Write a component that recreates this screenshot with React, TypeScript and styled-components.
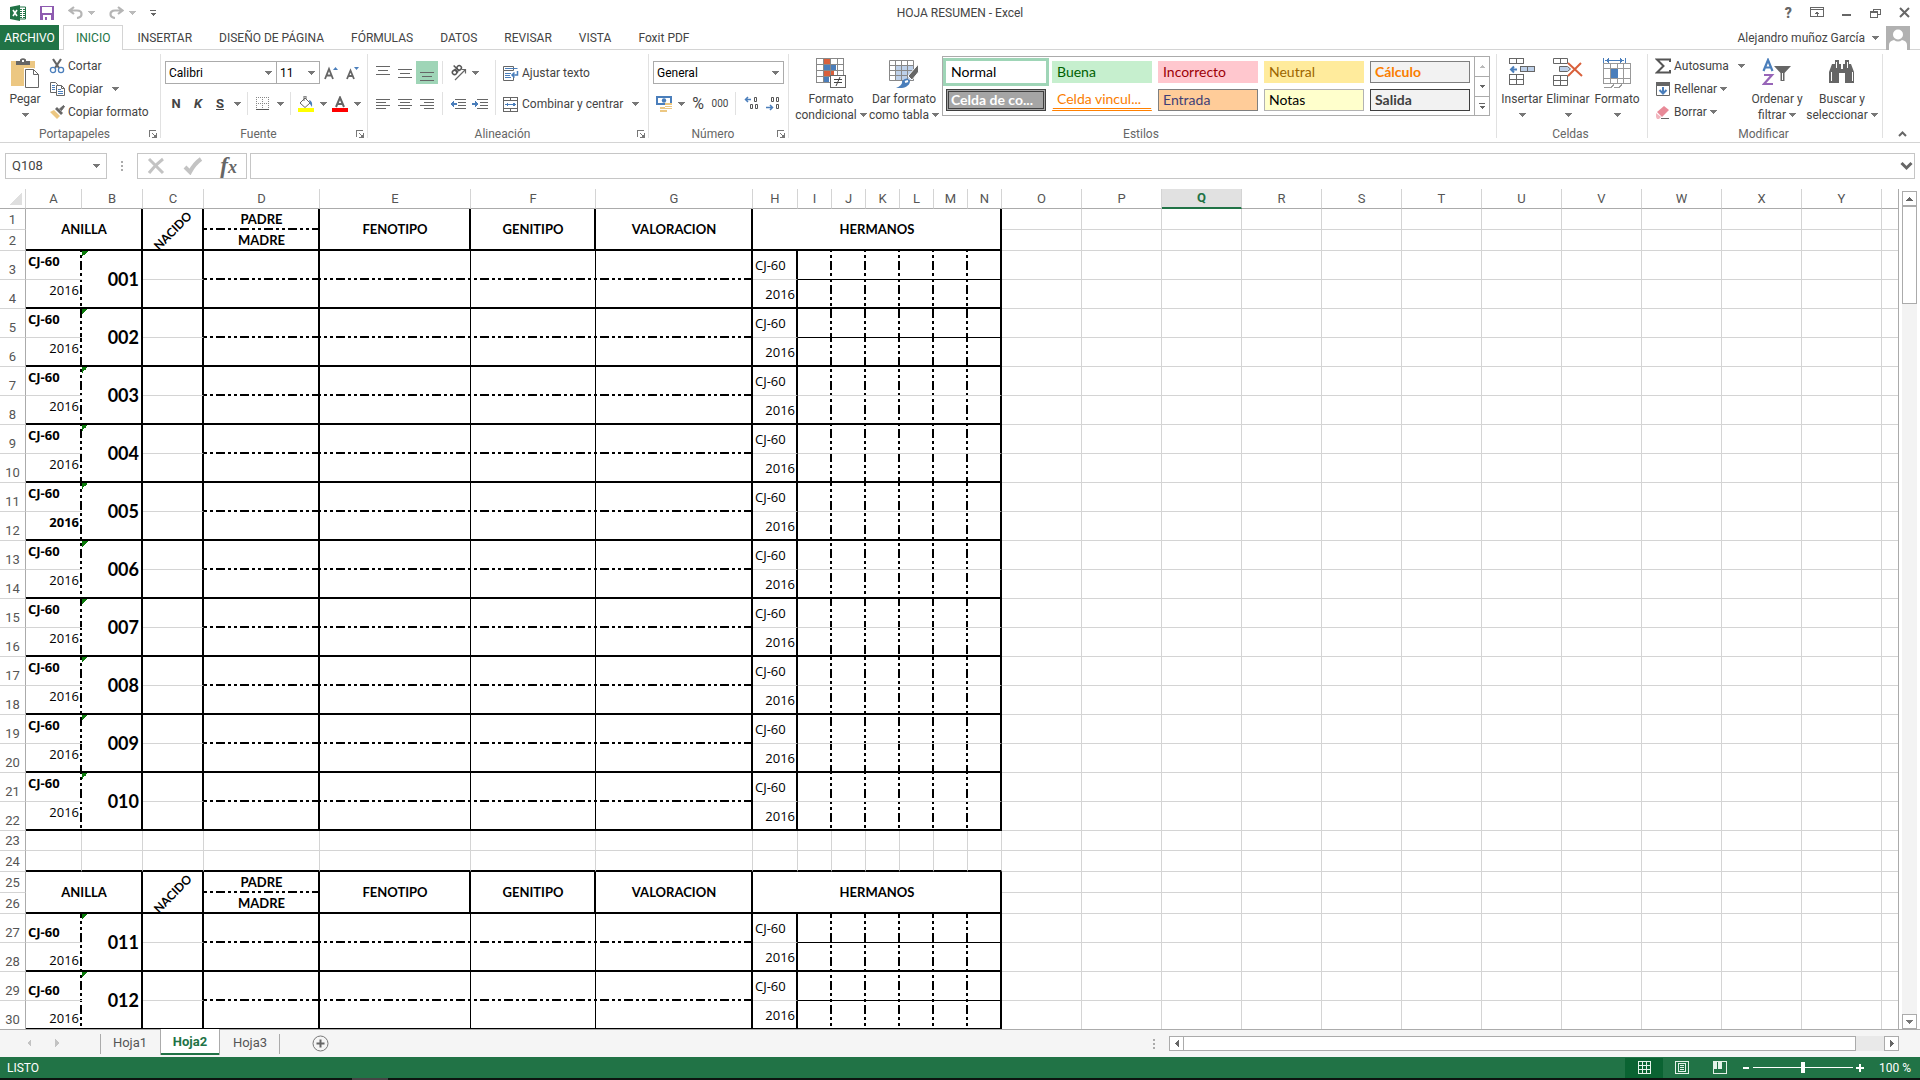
import React from 'react';
import styled, { createGlobalStyle, css } from 'styled-components';

const UI = 'Roboto, "Open Sans", sans-serif';
const CELL = 'Lato, "Open Sans", sans-serif';
const DATA = '"Open Sans", Lato, sans-serif';
const GREEN = '#217346';
const GRID = '#d4d4d4';
const EDGE = '#ababab';
const BLUE = '#4a7ebb';
const INK = '#666';

const Global = createGlobalStyle`
  *, *::before, *::after { box-sizing: border-box; }
  body { margin: 0; font: 12px/16px ${UI}; color: #444; background: #fff; overflow: hidden; }
  button, input, select { font: inherit; color: inherit; margin: 0; padding: 0; border: 0; background: none; border-radius: 0; }
  button { cursor: default; }
  svg { display: block; flex: none; }
`;

const Window = styled.div`
  display: flex;
  flex-direction: column;
  height: 100vh;
`;

/* ---------- icons ---------- */

const Arrow = ({ color = '#777' }: { color?: string }) => (
  <svg width="7" height="4" viewBox="0 0 7 4" shapeRendering="crispEdges"><path d="M0 0h7L4 4H3z" fill={color} /></svg>
);

type IconProps = { w?: number; h?: number; vb?: string; crisp?: boolean; children: React.ReactNode };
const Icon = ({ w = 16, h = 16, vb, crisp, children }: IconProps) => (
  <svg width={w} height={h} viewBox={vb ?? `0 0 ${w} ${h}`} fill="none" shapeRendering={crisp ? 'crispEdges' : 'auto'} aria-hidden="true">
    {children}
  </svg>
);

const ExcelIcon = () => (
  <Icon>
    <path d="M9 2h6.5v12H9z" fill="#fff" stroke={GREEN} />
    <path d="M10 4.5h2M13 4.5h2M10 6.5h2M13 6.5h2M10 8.5h2M13 8.5h2M10 10.500h2M13 10.500h2M10 12.500h2M13 12.500h2" stroke={GREEN} />
    <path d="M0 2l10-2v16L0 14z" fill={GREEN} />
    <path d="M3 5l4 6M7 5l-4 6" stroke="#fff" strokeWidth="1.600" />
  </Icon>
);
const SaveIcon = () => (
  <Icon w={14} h={14} crisp>
    <path d="M0 0h14v14H0z" fill="#8e5bb0" />
    <path d="M2 1h10v6H2zM3 9h8v5H3z" fill="#fff" />
    <path d="M5 11h2v3H5z" fill="#8e5bb0" />
  </Icon>
);
const UndoIcon = () => (
  <Icon w={15} h={13}><path d="M6 1L1.500 4.500 6 8M2 4.500h7c6 0 6 7 0 7.500" stroke="#b5b5b5" strokeWidth="2.200" /></Icon>
);
const RedoIcon = () => (
  <Icon w={15} h={13}><path d="M9 1l4.500 3.500L9 8M13 4.500H6c-6 0-6 7 0 7.500" stroke="#b5b5b5" strokeWidth="2.200" /></Icon>
);
const CustomizeIcon = () => (
  <Icon w={6} h={6} crisp><path d="M0 0h6v1H0zM0 3h6L3 6z" fill={INK} /></Icon>
);
const PasteIcon = () => (
  <Icon w={30} h={30}>
    <path d="M1 3h24v25H1z" fill="#ecc782" />
    <path d="M6 3h4V1.500Q13-1 16 1.500V3h4v4H6z" fill={INK} />
    <path d="M12 2h2v2h-2z" fill="#fff" />
    <path d="M15.500 11.500h8l5 5v13h-13z" fill="#fff" stroke="#fff" strokeWidth="3" />
    <path d="M15.500 11.500h8l5 5v13h-13zM23.500 11.500v5h5" fill="#fff" stroke={INK} />
  </Icon>
);
const CutIcon = () => (
  <Icon>
    <path d="M4 1l6 9M12 1L6 10" stroke={INK} strokeWidth="2.200" />
    <circle cx="4" cy="12" r="2.600" stroke={BLUE} strokeWidth="1.300" /><circle cx="12" cy="12" r="2.600" stroke={BLUE} strokeWidth="1.300" />
  </Icon>
);
const CopyIcon = () => (
  <Icon>
    <path d="M1.500 1.500h5l2 2v8h-7z" fill="#fff" stroke={INK} />
    <path d="M3 4.500h3M3 6.500h3M3 8.500h3" stroke={BLUE} />
    <path d="M7.500 4.500h5l3 3v7h-8z" fill="#fff" stroke={INK} />
    <path d="M12.500 4.500v3h3" stroke={INK} />
    <path d="M9 8.500h3M9 10.500h5M9 12.500h5" stroke={BLUE} />
  </Icon>
);
const BrushIcon = () => (
  <Icon>
    <path d="M1 8l4-2 6 6-3 3z" fill="#ecc782" />
    <path d="M6 5l2-2 6 6-2 2z" fill={INK} />
    <path d="M10.500 5L14.500 1.500l1 1-3 4z" fill={INK} stroke={INK} />
  </Icon>
);
const GrowIcon = ({ small }: { small?: boolean }) => (
  <Icon w={14} h={14}>
    <path d={small ? 'M1 13L4.500 4.500 8 13M2.500 10h4' : 'M1 13L5 3l4 10M2.500 9.500h5'} stroke={INK} strokeWidth="1.800" />
    <path d={small ? 'M8 1h5l-2.500 3z' : 'M9 4h5l-2.500-3z'} fill={BLUE} />
  </Icon>
);
const BordersIcon = () => (
  <Icon w={14} h={14} crisp>
    <path d="M0 .5h14M0 6.500h14M.5 0v12M6.500 0v12M12.500 0v12" stroke="#888" strokeDasharray="1 1" />
    <path d="M0 12h13v1H0z" fill="#555" />
  </Icon>
);
const FillIcon = () => (
  <Icon>
    <path d="M2 7l5-5 5 5-5 4.500z" fill="#fff" stroke={INK} /><path d="M6 5V0h2v3" stroke={INK} />
    <path d="M11 4q4 1 3 7l-2-3z" fill={BLUE} /><path d="M0 12h16v4H0z" fill="#ff0" />
  </Icon>
);
const FontColorIcon = () => (
  <Icon>
    <path d="M4 11L8 1.500 12 11M5.500 8h5" stroke={INK} strokeWidth="2" /><path d="M0 12h16v4H0z" fill="red" />
  </Icon>
);
const Lines = ({ rows, y = 0 }: { rows: [number, number][]; y?: number }) => (
  <Icon w={14} h={16} crisp>
    {rows.map(([x, w], i) => <path key={i} d={`M${x} ${y + i * (rows.length > 3 ? 3 : 4)}.5h${w}`} stroke={INK} />)}
  </Icon>
);
const IndentIcon = ({ right }: { right?: boolean }) => (
  <Icon crisp>
    <path d="M5 3.500h11M8 6.500h8M8 9.500h8M5 12.500h11" stroke={INK} />
    <path d={right ? 'M0 7h3V5l4 3-4 3V9H0z' : 'M7 7H4V5L0 8l4 3V9h3z'} fill={BLUE} />
  </Icon>
);
const OrientIcon = () => (
  <Icon w={17} h={17}>
    <path d="M5 16L15 6M11.500 5.500H15.500V9.500" stroke={INK} strokeWidth="1.200" />
    <g stroke="#555" strokeWidth="1.500" transform="rotate(-45 6 7)">
      <circle cx="4" cy="7" r="2.200" /><path d="M6.500 4.500v5" /><circle cx="10.500" cy="7" r="2.200" /><path d="M8.200 1.500v8" />
    </g>
  </Icon>
);
const WrapIcon = () => (
  <Icon>
    <path d="M.5 1.500h10v4H.5zM.5 5.500v10h10v-4" stroke={INK} />
    <path d="M2 3.500h12.500M2 8.500h6M2 10.500h5M2 12.500h6" stroke={BLUE} />
    <path d="M14.500 6v4H9M11.500 7.500L9 10l2.500 2.500" stroke={BLUE} strokeWidth="1.500" />
  </Icon>
);
const MergeIcon = () => (
  <Icon crisp>
    <path d="M.5 1.500h14v14H.5zM.5 4.500h14M.5 12.500h14M7.500 1v3M7.500 13v3" stroke={INK} />
    <path d="M3 8.500h9" stroke={BLUE} /><path d="M2 8.500l3-2v4zM13 8.500l-3-2v4z" fill={BLUE} />
  </Icon>
);
const MoneyIcon = () => (
  <Icon>
    <path d="M0 0h16v9H0z" fill={BLUE} /><path d="M2 2h12v5H2z" fill="#fff" /><circle cx="8" cy="4.500" r="2.200" fill={BLUE} />
    <path d="M9 7h7v6H9zM4 11h7v5H4z" fill="#ecc782" /><path d="M9 9.500h7M9 11.500h7M4 13.500h7" stroke="#fff" />
  </Icon>
);
const zero = (x: number, y: number) => `M${x}.5 ${y}.5h2v4h-2z`;
const DecimalIcon = ({ more }: { more?: boolean }) => (
  <Icon w={15} h={15}>
    <path d={more ? zero(10, 1) + zero(6, 8) + zero(11, 8) : zero(5, 1) + zero(10, 1) + zero(10, 8)} stroke="#555" />
    <path d={more ? 'M7 3.500H1.500M4 1L1.500 3.500 4 6' : 'M0 11.500h6M4 9l2.500 2.500L4 14'} stroke={BLUE} strokeWidth="1.500" />
  </Icon>
);
const ConditionalIcon = () => (
  <Icon w={30} h={30} crisp>
    <path d="M8 1h6v6H8zM8 13h10v6H8z" fill="#d9603b" /><path d="M8 7h12v6H8zM8 19h5v6H8z" fill={BLUE} />
    <path d="M.5.5h27v24H.5zM.5 6.500h27M.5 12.500h27M.5 18.500h27M7.500.5v24M14.500.5v24M21.500.5v24" stroke="#888" />
    <path d="M14.500 17.500h15v12h-15z" fill="#fff" stroke={INK} />
    <path d="M18 21.500h8M18 24.500h8M24 19l-4 9" stroke="#444" shapeRendering="auto" />
  </Icon>
);
const TableFormatIcon = () => (
  <Icon w={30} h={30}>
    <path d="M7 8h18v15H7z" fill="#bdd0e9" />
    <path d="M.5 2.500h24v20H.5zM.5 7.500h24M.5 12.500h24M.5 17.500h24M6.500 2.500v20M12.500 2.500v20M18.500 2.500v20" stroke="#888" />
    <path d="M29.500 6L19 18l4 4 6.500-8z" fill={INK} stroke="#fff" />
    <path d="M7 30q7-3 6-7 5-5 8 0c0 5-6 8-14 7z" fill={BLUE} /><path d="M16 24l3-1" stroke="#fff" strokeWidth="2" />
  </Icon>
);
const InsertCellsIcon = () => (
  <Icon w={28} h={30} crisp>
    <path d="M1.500.5h14v5h-14zM8.500.5v5M1.500 16.500h14v10h-14zM1.500 21.500h14M8.500 16.500v10" stroke={INK} />
    <path d="M12.500 8.500h14v5h-14zM19.500 8.500v5" fill="#bdd0e9" stroke={INK} />
    <path d="M9 11.500H4M6 8.500l-3 3 3 3" stroke={BLUE} strokeWidth="2" shapeRendering="auto" />
  </Icon>
);
const DeleteCellsIcon = () => (
  <Icon w={30} h={30}>
    <path d="M.5.5h14v5h-14zM7.500.5v5M.5 17.500h14v10h-14zM.5 22.500h14M7.500 17.500v10" stroke={INK} />
    <path d="M6.500 8.500h8l3 2.500-3 2.500h-8z" fill="#bdd0e9" stroke={INK} />
    <path d="M15 5l14 13M28 5L15 18" stroke="#d9603b" strokeWidth="2" />
  </Icon>
);
const FormatCellsIcon = () => (
  <Icon w={28} h={30} crisp>
    <path d="M.5 5.500h27v20H.5zM.5 10.500h27M.5 20.500h27M7.500 5.500v20M20.500 5.500v20M14.500 5.500v20" stroke="#999" />
    <path d="M8 11h7v9H8z" fill={BLUE} />
    <path d="M.5 0v5M22.500 0v5M3 2.500h17" stroke={BLUE} /><path d="M2 2.500L6 0v5zM21 2.500L17 0v5z" fill={BLUE} />
    <path d="M1 29.500h7l3-3M11 29.500h5l3-3" stroke="#999" />
  </Icon>
);
const SumIcon = () => <Icon><path d="M15 4V1.500H2L8.500 8 2 14.500H15V12" stroke="#555" strokeWidth="2" /></Icon>;
const FillDownIcon = () => (
  <Icon>
    <path d="M1.500 1.500h13v13h-13z" fill="#fff" stroke={INK} /><path d="M1 1h14v4H1z" fill={INK} />
    <path d="M8 6v6M4.500 9L8 12.500 11.500 9" stroke={BLUE} strokeWidth="2" />
  </Icon>
);
const EraserIcon = () => (
  <Icon><path d="M2 8l7-6 5 4-7 7z" fill="#e88a98" /><path d="M1 9l5 4-2 2H2l-1-2z" fill="#f2b6bf" /><path d="M6 14.500h8" stroke={INK} /></Icon>
);
const SortIcon = () => (
  <Icon w={30} h={30}>
    <path d="M1.500 13L6 2l4.500 11M3 9.500h6" stroke={BLUE} strokeWidth="2.200" />
    <path d="M2 17h8L2 26h9" stroke="#9765b8" strokeWidth="2.200" />
    <path d="M12 8h17l-6.500 7v8h-4v-8z" fill={INK} /><path d="M20.500 15v7" stroke="#fff" />
  </Icon>
);
const FindIcon = () => (
  <Icon w={28} h={30}>
    <path d="M7 2h4v4h2v5h2V6h2V2h4v4h2l3 8v11h-9V15h-6v10H1V14l3-8h3z" fill={INK} />
    <path d="M3.500 14v9M24.500 14v9M8.500 4v6M19.500 4v6" stroke="#fff" />
  </Icon>
);
const LaunchIcon = () => (
  <Icon w={8} h={8} crisp><path d="M.5 7V.5H7M3 3l4 4M7.500 3v4.500H3" stroke="#777" /><path d="M4 7h3V4z" fill="#777" /></Icon>
);
const RibbonModeIcon = () => (
  <Icon w={14} h={11} crisp><path d="M.5.5h13v9H.5zM.5 2.500h13" stroke={INK} /><path d="M7 9V5M5 6.500h4M6 5.500h2" stroke={INK} /></Icon>
);
const RestoreIcon = () => (
  <Icon w={11} h={10} crisp><path d="M3 3V1h7v5H8" stroke={INK} /><path d="M.5 3.500h7v6h-7zM3.500 1h7M.5 4h7" stroke={INK} /></Icon>
);
const CloseIcon = () => <Icon w={11} h={11}><path d="M1 1l9 9M10 1l-9 9" stroke={INK} strokeWidth="2" /></Icon>;

/* ---------- title bar ---------- */

const TitleBar = styled.header`
  display: grid;
  grid-template-columns: 1fr auto 1fr;
  align-items: center;
  height: 25px;
  padding: 0 10px;
`;
const QuickTools = styled.div`
  display: flex;
  align-items: center;
  gap: 14px;
`;
const PlainButton = styled.button`
  display: flex;
  align-items: center;
  gap: 5px;
`;
const WindowTools = styled.div`
  display: flex;
  justify-content: flex-end;
  align-items: center;
  gap: 18px;
`;
const Help = styled.span`
  font-size: 14px;
  font-weight: 900;
  color: ${INK};
`;
const Title = styled.h1`
  margin: 0;
  font-size: 12px;
  font-weight: 400;
`;

/* ---------- tabs ---------- */

const TabBar = styled.nav`
  display: flex;
  height: 25px;
  box-shadow: inset 0 -1px ${GRID};
`;
const FileTab = styled.button`
  width: 59px;
  margin-right: 4px;
  background: ${GREEN};
  color: #fff;
`;
const Tab = styled.button<{ $active?: boolean }>`
  padding: 0 12px;
  margin-right: 1px;
  border: 1px solid ${p => (p.$active ? GRID : 'transparent')};
  border-bottom: 0;
  ${p => p.$active && css`background: #fff; color: ${GREEN};`}
`;
const Account = styled.button`
  display: flex;
  align-items: center;
  gap: 7px;
  margin: 0 10px 0 auto;
`;

/* ---------- ribbon ---------- */

const Ribbon = styled.div`
  display: flex;
  height: 93px;
  border-bottom: 1px solid ${GRID};
`;
const Group = styled.section<{ $w?: number }>`
  display: flex;
  flex-direction: column;
  flex: ${p => (p.$w ? `0 0 ${p.$w}px` : '1 1 0')};
  padding-top: 4px;
  background: linear-gradient(#e1e1e1, #e1e1e1) right 4px / 1px 84px no-repeat;
`;
const Body = styled.div<{ $pad?: number }>`
  display: flex;
  height: 72px;
  padding: 0 4px 0 ${p => p.$pad ?? 4}px;
`;
const GroupFoot = styled.div`
  display: flex;
  align-items: center;
  height: 16px;
  padding-right: 4px;
  color: #666;
`;
const GroupName = styled.span`
  flex: 1;
  text-align: center;
`;
const BigButton = styled.button<{ $w: number }>`
  display: flex;
  flex-direction: column;
  align-items: center;
  width: ${p => p.$w}px;
  padding-top: 4px;
  line-height: 16px;
`;
const BigLabel = styled.span`
  margin-top: 3px;
`;
const BigSecond = styled.span`
  display: flex;
  align-items: center;
  gap: 3px;
  height: 16px;
  white-space: nowrap;
`;
const Stack = styled.div<{ $w?: number }>`
  display: flex;
  flex-direction: column;
  ${p => p.$w && `width: ${p.$w}px;`}
`;
const TextButton = styled.button<{ $far?: boolean }>`
  display: flex;
  align-items: center;
  gap: 3px;
  height: 23px;
  padding-left: 3px;
  white-space: nowrap;
  & > svg + svg, & > span + svg { margin-left: ${p => (p.$far ? 6 : 0)}px; }
`;
const Rows = styled.div`
  display: flex;
  flex-direction: column;
  gap: 8px;
  padding-top: 7px;
`;
const ToolRow = styled.div`
  display: flex;
  align-items: center;
  height: 23px;
`;
const Tool = styled.button<{ $w?: number; $on?: boolean }>`
  display: flex;
  align-items: center;
  justify-content: center;
  width: ${p => p.$w ?? 22}px;
  height: 23px;
  background: ${p => (p.$on ? '#9fd5b7' : 'none')};
`;
const Letter = styled.span<{ $italic?: boolean; $under?: boolean }>`
  font-size: 13px;
  font-weight: 700;
  font-style: ${p => (p.$italic ? 'italic' : 'normal')};
  text-decoration: ${p => (p.$under ? 'underline' : 'none')};
`;
const Percent = styled.span`
  font-size: 16px;
`;
const Thousands = styled.span`
  font-size: 10px;
`;
const Divider = styled.span<{ $h?: number }>`
  width: 1px;
  height: ${p => p.$h ?? 23}px;
  margin: 0 4px;
  background: #e1e1e1;
`;
const LongDivider = styled(Divider)`
  align-self: flex-start;
  margin-top: 6px;
`;
const Picker = styled.label<{ $w: number; $joined?: boolean }>`
  display: grid;
  grid-template-columns: 1fr 16px;
  align-items: center;
  width: ${p => p.$w}px;
  height: 23px;
  margin-left: ${p => (p.$joined ? -1 : 0)}px;
  border: 1px solid ${EDGE};
  & > select {
    grid-area: 1 / 1 / 2 / 3;
    width: 100%;
    padding-left: 3px;
    appearance: none;
    color: #000;
  }
  & > svg { grid-area: 1 / 2; pointer-events: none; justify-self: center; }
`;
const Gallery = styled.div`
  display: flex;
  flex: 1;
  height: 60px;
  margin: 2px 3px 0 3px;
  border: 1px solid ${EDGE};
`;
const StyleGrid = styled.div`
  display: grid;
  flex: 1;
  grid-template-columns: repeat(5, 1fr);
  grid-auto-rows: 22px;
  gap: 6px;
  padding: 4px 4px 0 3px;
`;
const StyleCell = styled.button<{ $fg: string; $bg?: string; $line?: string; $bold?: boolean; $kind?: 'current' | 'linked' | 'check' }>`
  padding-left: 4px;
  border: 1px solid ${p => p.$line ?? p.$bg ?? '#fff'};
  background: ${p => p.$bg ?? '#fff'};
  color: ${p => p.$fg};
  font: ${p => (p.$bold ? 700 : 400)} 14px/18px ${CELL};
  text-align: left;
  white-space: nowrap;
  ${p => p.$kind === 'current' && css`box-shadow: 0 0 0 3px #9fd5b7;`}
  ${p => p.$kind === 'linked' && css`border-bottom: 3px double #ff8001;`}
  ${p => p.$kind === 'check' && css`border: 3px double #3f3f3f; padding-left: 2px; line-height: 14px;`}
`;
const GalleryScroll = styled.div`
  display: grid;
  grid-template-rows: repeat(3, 1fr);
  width: 15px;
  border-left: 1px solid ${EDGE};
`;
const ScrollStep = styled.button`
  display: grid;
  place-items: center;
  & + & { border-top: 1px solid ${EDGE}; }
`;
const Collapse = styled.button`
  display: grid;
  place-items: center;
  align-self: flex-end;
  flex: 0 0 37px;
  height: 16px;
  padding-right: 8px;
  padding-left: 10px;
`;

/* ---------- formula bar ---------- */

const FormulaBar = styled.div`
  display: flex;
  align-items: center;
  height: 46px;
  padding: 0 5px;
`;
const NameBox = styled.label`
  display: flex;
  align-items: center;
  width: 102px;
  height: 26px;
  padding: 0 6px;
  border: 1px solid #c6c6c6;
  font-size: 13px;
  & > input { flex: 1; min-width: 0; }
`;
const Grip = styled.span`
  width: 2px;
  height: 10px;
  margin: 0 14px;
  background: repeating-linear-gradient(${EDGE} 0 2px, transparent 2px 4px);
`;
const FormulaTools = styled.div`
  display: flex;
  align-items: center;
  justify-content: space-between;
  width: 110px;
  height: 26px;
  margin-right: 3px;
  padding: 0 9px;
  border: 1px solid #c6c6c6;
`;
const Fx = styled.span`
  font: italic 700 23px/22px "Liberation Serif", serif;
  color: ${INK};
`;
const FxSmall = styled.span`
  font-size: 18px;
`;
const FormulaInput = styled.label`
  display: flex;
  flex: 1;
  align-items: center;
  height: 26px;
  padding: 0 1px;
  border: 1px solid #c6c6c6;
  & > input { flex: 1; }
`;

/* ---------- sheet ---------- */

const SheetArea = styled.main`
  display: flex;
  flex: 1;
  min-height: 0;
`;
const Viewport = styled.div`
  flex: 1;
  min-width: 0;
  overflow: hidden;
  border-right: 1px solid ${EDGE};
`;
const Sheet = styled.table`
  table-layout: fixed;
  width: 0;
  border-collapse: separate;
  border-spacing: 0;
  color: #000;
  font: 12px/20px ${CELL};
  & td, & th { padding: 0; }
`;
const Corner = styled.td`
  height: 20px;
  border-right: 1px solid ${GRID};
  border-bottom: 1px solid ${EDGE};
  background: linear-gradient(135deg, transparent 50%, #dfdfdf 50%) 10px 4px / 12px 12px no-repeat;
`;
const ColHead = styled.th<{ $sel?: boolean }>`
  height: 20px;
  border-right: 1px solid ${GRID};
  border-bottom: 1px solid ${EDGE};
  font: 13px/18px ${UI};
  color: #555;
  ${p => p.$sel && css`background: #e1e1e1; border-bottom: 2px solid ${GREEN}; color: ${GREEN}; font-weight: 700;`}
`;
const RowHead = styled.th`
  border-right: 1px solid ${EDGE};
  border-bottom: 1px solid ${GRID};
  vertical-align: bottom;
  font: 13px/19px ${UI};
  color: #555;
`;

type Line = 'none' | 'grid' | 'thin' | 'thick' | 'dash';
const lineCss = { none: '0', dash: '0', grid: `1px solid ${GRID}`, thin: '1px solid #000', thick: '2px solid #000' };
const dashStops = '#000 0 9px, transparent 9px 12px, #000 12px 15px, transparent 15px 18px, #000 18px 21px, transparent 21px 24px';

type CellProps = {
  $r: Line; $b: Line; $x: number; $y: number;
  $bold?: boolean; $align?: string; $valign?: string; $flag?: boolean;
};
const dashes = (p: CellProps) => {
  const layers: string[] = [];
  const px = (24 - (p.$x % 24)) % 24;
  const py = (((21 - p.$y) % 24) + 24) % 24;
  if (p.$b === 'dash') layers.push(`linear-gradient(to right, ${dashStops}) ${px}px 100% / 24px 2px repeat-x`);
  if (p.$r === 'dash') layers.push(`linear-gradient(${dashStops}) 100% ${py}px / 2px 24px repeat-y`);
  if (p.$flag) layers.push('linear-gradient(135deg, #0a7a0a 50%, transparent 50%) 0 0 / 6px 6px no-repeat');
  return layers.join(', ') || 'none';
};
const Cell = styled.td<CellProps>`
  border-right: ${p => lineCss[p.$r]};
  border-bottom: ${p => lineCss[p.$b]};
  background: ${dashes};
  text-align: ${p => p.$align ?? 'center'};
  vertical-align: ${p => p.$valign ?? 'middle'};
  font: ${p => (p.$bold ? 700 : 400)} 13px/20px ${DATA};
  && { padding: 0 ${p => (p.$r === 'dash' ? 3 : 1)}px 0 2px; }
`;
const RingNumber = styled(Cell)`
  font: 700 18px/20px ${CELL};
  && { padding-right: 2px; }
`;
const Heading = styled(Cell)`
  font: 700 13px/18px ${CELL};
  && { padding: 0 1px ${p => (p.$b === 'dash' ? 2 : 0)}px 2px; }
`;
const Slanted = styled.span`
  display: block;
  margin-top: 4px;
  font-size: 12px;
  transform: rotate(-45deg);
`;

const WIDTHS = [56, 61, 61, 116, 151, 125, 157, 45, 34, 34, 34, 34, 34, 34, ...Array(12).fill(80)] as number[];
const NAMES = 'ABCDEFGHIJKLMNOPQRSTUVWXY'.split('');
const HEAD_W = 26;
const TOP = 209;
const X = WIDTHS.map((_, i) => HEAD_W + WIDTHS.slice(0, i).reduce((a, b) => a + b, 0));
const heightOf = (r: number) => (r === 23 ? 20 : [1, 2, 24, 25, 26].includes(r) ? 21 : 29);
const ROWS = Array.from({ length: 30 }, (_, i) => i + 1);
const Y = ROWS.map((_, i) => TOP + ROWS.slice(0, i).reduce((a, r) => a + heightOf(r), 0));

const SheetRow = ({ r }: { r: number }) => {
  const y = Y[r - 1];
  const at = (c: number) => ({ $x: X[c], $y: y });
  const header = r === 1 || r === 25;
  const header2 = r === 2 || r === 26;
  const data = (r >= 3 && r <= 22) || (r >= 27 && r <= 30);
  const first = data && r % 2 === 1;
  const id = r < 23 ? (r - 1) / 2 : (r - 5) / 2;
  const cells: React.ReactNode[] = [];

  if (header) {
    cells.push(
      <Heading key="a" colSpan={2} rowSpan={2} {...at(0)} $r="thick" $b="thick">ANILLA</Heading>,
      <Heading key="c" rowSpan={2} {...at(2)} $r="thick" $b="thick"><Slanted>NACIDO</Slanted></Heading>,
      <Heading key="d" {...at(3)} $r="thick" $b="dash">PADRE</Heading>,
      <Heading key="e" rowSpan={2} {...at(4)} $r="thick" $b="thick">FENOTIPO</Heading>,
      <Heading key="f" rowSpan={2} {...at(5)} $r="thick" $b="thick">GENITIPO</Heading>,
      <Heading key="g" rowSpan={2} {...at(6)} $r="thick" $b="thick">VALORACION</Heading>,
      <Heading key="h" colSpan={7} rowSpan={2} {...at(7)} $r="thick" $b="thick">HERMANOS</Heading>,
    );
  } else if (header2) {
    cells.push(<Heading key="d" {...at(3)} $r="thick" $b="thick">MADRE</Heading>);
  } else if (data) {
    const tall = r < 23 ? 'top' : 'bottom';
    const inner: Line = first ? 'grid' : 'thick';
    cells.push(
      <Cell key="a" {...at(0)} $r="dash" $b={inner} $valign={tall} $align={first ? 'left' : 'right'} $bold={first || r === 12}>
        {first ? 'CJ-60' : '2016'}
      </Cell>,
    );
    if (first) {
      cells.push(
        <RingNumber key="b" rowSpan={2} {...at(1)} $r="thick" $b="thick" $align="right" $flag>{String(id).padStart(3, '0')}</RingNumber>,
      );
    }
    cells.push(<Cell key="c" {...at(2)} $r="thick" $b={inner} />);
    [3, 4, 5, 6].forEach(c =>
      cells.push(<Cell key={c} {...at(c)} $r={c === 3 || c === 6 ? 'thick' : 'thin'} $b={first ? 'dash' : 'thick'} />),
    );
    cells.push(<Cell key="h" {...at(7)} $r="thick" $b={inner} $align={first ? 'left' : 'right'}>{first ? 'CJ-60' : '2016'}</Cell>);
    const solid = [3, 5, 27, 29].includes(r);
    for (let c = 8; c < 14; c++) {
      cells.push(<Cell key={c} {...at(c)} $r={c === 13 ? 'thick' : 'dash'} $b={!first ? 'thick' : solid ? 'thin' : 'grid'} />);
    }
  } else {
    for (let c = 0; c < 14; c++) cells.push(<Cell key={c} {...at(c)} $r="grid" $b={r === 24 ? 'thick' : 'grid'} />);
  }
  for (let c = 14; c < WIDTHS.length; c++) cells.push(<Cell key={`x${c}`} {...at(c)} $r="grid" $b="grid" />);

  return <tr style={{ height: heightOf(r) }}><RowHead scope="row">{r}</RowHead>{cells}</tr>;
};

const VScroll = styled.div`
  display: flex;
  flex-direction: column;
  width: 15px;
  margin: 2px 3px 0;
  background: #f3f3f3;
`;
const ScrollButton = styled.button`
  display: grid;
  place-items: center;
  flex: none;
  width: 15px;
  height: 15px;
  border: 1px solid ${EDGE};
  background: #fff;
`;
const VThumb = styled.div`
  height: 98px;
  border: 1px solid ${EDGE};
  background: #fff;
`;
const Push = styled.span`
  flex: 1;
`;

/* ---------- sheet tabs & status ---------- */

const SheetBar = styled.div`
  display: flex;
  height: 28px;
  padding-right: 21px;
  background: #f5f5f5;
  border-top: 1px solid ${EDGE};
`;
const NavArrows = styled.div`
  display: flex;
  align-items: center;
  gap: 24px;
  width: 100px;
  padding: 0 0 2px 27px;
`;
const SheetTab = styled.button<{ $active?: boolean }>`
  width: 60px;
  height: 25px;
  font-size: 13px;
  color: #555;
  background: linear-gradient(${EDGE}, ${EDGE}) left 4px / 1px 20px no-repeat;
  ${p => p.$active && css`
    background: #fff;
    border: 1px solid ${EDGE};
    border-width: 0 1px;
    box-shadow: inset 0 -2px ${GREEN};
    color: ${GREEN};
    font-weight: 700;
    margin-top: -1px;
    height: 26px;
  `}
`;
const LastTab = styled(SheetTab)`
  background-position: right 4px;
`;
const AddSheet = styled.button`
  display: grid;
  place-items: center;
  margin-left: 32px;
  padding-bottom: 1px;
`;
const HScroll = styled.div`
  display: flex;
  width: 730px;
  height: 15px;
  margin: 6px 0 0;
  background: #e9e9e9;
`;
const HThumb = styled.div`
  flex: 1;
  margin: 0 28px 0 -1px;
  border: 1px solid ${EDGE};
  background: #fff;
`;
const SheetGrip = styled(Grip)`
  align-self: center;
`;
const StatusBar = styled.footer`
  display: flex;
  align-items: center;
  height: 21px;
  padding: 0 9px 0 7px;
  background: ${GREEN};
  color: #fff;
`;
const ViewButton = styled.button<{ $on?: boolean }>`
  display: grid;
  place-items: center;
  width: 38px;
  height: 20px;
  background: ${p => (p.$on ? '#0a6332' : 'none')};
`;
const ZoomButton = styled.button`
  display: grid;
  place-items: center;
  width: 14px;
`;
const Zoom = styled.input`
  width: 100px;
  height: 12px;
  appearance: none;
  background: linear-gradient(#fff, #fff) center / 100% 1px no-repeat;
  &::-webkit-slider-thumb { appearance: none; width: 4px; height: 11px; background: #fff; }
`;
const ZoomValue = styled.span`
  margin-left: 12px;
`;
const TaskEdge = styled.div`
  height: 2px;
  background: linear-gradient(#444, #444) 352px 0 / 36px 2px no-repeat #0c1410;
`;

const VIEW_STROKE = '#e4f2e9';

export default function App() {
  return (
    <Window>
      <Global />
      <TitleBar>
        <QuickTools>
          <ExcelIcon />
          <PlainButton aria-label="Guardar"><SaveIcon /></PlainButton>
          <PlainButton aria-label="Deshacer"><UndoIcon /><Arrow color="#bbb" /></PlainButton>
          <PlainButton aria-label="Rehacer"><RedoIcon /><Arrow color="#bbb" /></PlainButton>
          <PlainButton aria-label="Personalizar"><CustomizeIcon /></PlainButton>
        </QuickTools>
        <Title>HOJA RESUMEN - Excel</Title>
        <WindowTools>
          <PlainButton><Help>?</Help></PlainButton>
          <PlainButton aria-label="Opciones de la cinta"><RibbonModeIcon /></PlainButton>
          <PlainButton aria-label="Minimizar"><Icon w={10} h={11} crisp><path d="M0 7h9v2H0z" fill={INK} /></Icon></PlainButton>
          <PlainButton aria-label="Restaurar"><RestoreIcon /></PlainButton>
          <PlainButton aria-label="Cerrar"><CloseIcon /></PlainButton>
        </WindowTools>
      </TitleBar>

      <TabBar>
        <FileTab>ARCHIVO</FileTab>
        <Tab $active>INICIO</Tab>
        {['INSERTAR', 'DISEÑO DE PÁGINA', 'FÓRMULAS', 'DATOS', 'REVISAR', 'VISTA', 'Foxit PDF'].map(t => <Tab key={t}>{t}</Tab>)}
        <Account>
          Alejandro muñoz García <Arrow />
          <Icon w={24} h={24}>
            <path d="M0 0h24v24H0z" fill="#b1b1b1" /><circle cx="12" cy="8.500" r="5" fill="#fff" />
            <path d="M3 24v-5q0-4 5-5 4 3 8 0 5 1 5 5v5z" fill="#fff" />
          </Icon>
        </Account>
      </TabBar>

      <Ribbon>
        <Group $w={161}>
          <Body>
            <BigButton $w={42}><PasteIcon /><BigLabel>Pegar</BigLabel><BigSecond><Arrow /></BigSecond></BigButton>
            <Stack>
              <TextButton><CutIcon /><span>Cortar</span></TextButton>
              <TextButton $far><CopyIcon /><span>Copiar</span><Arrow /></TextButton>
              <TextButton><BrushIcon /><span>Copiar formato</span></TextButton>
            </Stack>
          </Body>
          <GroupFoot><GroupName>Portapapeles</GroupName><PlainButton aria-label="Portapapeles"><LaunchIcon /></PlainButton></GroupFoot>
        </Group>

        <Group $w={207}>
          <Body>
            <Rows>
              <ToolRow>
                <Picker $w={112}><select aria-label="Fuente"><option>Calibri</option></select><Arrow /></Picker>
                <Picker $w={44} $joined><select aria-label="Tamaño"><option>11</option></select><Arrow /></Picker>
                <Tool aria-label="Aumentar"><GrowIcon /></Tool>
                <Tool aria-label="Disminuir"><GrowIcon small /></Tool>
              </ToolRow>
              <ToolRow>
                <Tool><Letter>N</Letter></Tool>
                <Tool><Letter $italic>K</Letter></Tool>
                <Tool><Letter $under>S</Letter></Tool>
                <Tool $w={12} aria-label="Subrayado"><Arrow /></Tool>
                <Divider />
                <Tool aria-label="Bordes"><BordersIcon /></Tool>
                <Tool $w={12} aria-label="Más bordes"><Arrow /></Tool>
                <Divider />
                <Tool aria-label="Relleno"><FillIcon /></Tool>
                <Tool $w={12} aria-label="Más rellenos"><Arrow /></Tool>
                <Tool aria-label="Color"><FontColorIcon /></Tool>
                <Tool $w={12} aria-label="Más colores"><Arrow /></Tool>
              </ToolRow>
            </Rows>
          </Body>
          <GroupFoot><GroupName>Fuente</GroupName><PlainButton aria-label="Fuente"><LaunchIcon /></PlainButton></GroupFoot>
        </Group>

        <Group $w={281}>
          <Body>
            <Rows>
              <ToolRow>
                <Tool aria-label="Arriba"><Lines rows={[[0, 14], [2, 10], [0, 14]]} y={1} /></Tool>
                <Tool aria-label="Medio"><Lines rows={[[0, 14], [2, 10], [0, 14]]} y={4} /></Tool>
                <Tool $on aria-label="Abajo"><Lines rows={[[0, 14], [2, 10], [0, 14]]} y={7} /></Tool>
                <Divider />
                <Tool aria-label="Orientación"><OrientIcon /></Tool>
                <Tool $w={12} aria-label="Más orientaciones"><Arrow /></Tool>
              </ToolRow>
              <ToolRow>
                <Tool aria-label="Izquierda"><Lines rows={[[0, 14], [0, 10], [0, 14], [0, 10]]} y={3} /></Tool>
                <Tool aria-label="Centro"><Lines rows={[[0, 14], [2, 10], [0, 14], [2, 10]]} y={3} /></Tool>
                <Tool aria-label="Derecha"><Lines rows={[[0, 14], [4, 10], [0, 14], [4, 10]]} y={3} /></Tool>
                <Divider />
                <Tool aria-label="Disminuir sangría"><IndentIcon /></Tool>
                <Tool aria-label="Aumentar sangría"><IndentIcon right /></Tool>
              </ToolRow>
            </Rows>
            <LongDivider $h={55} />
            <Rows>
              <TextButton><WrapIcon /><span>Ajustar texto</span></TextButton>
              <TextButton $far><MergeIcon /><span>Combinar y centrar</span><Arrow /></TextButton>
            </Rows>
          </Body>
          <GroupFoot><GroupName>Alineación</GroupName><PlainButton aria-label="Alineación"><LaunchIcon /></PlainButton></GroupFoot>
        </Group>

        <Group $w={140}>
          <Body>
            <Rows>
              <Picker $w={131}><select aria-label="Formato de número"><option>General</option></select><Arrow /></Picker>
              <ToolRow>
                <Tool aria-label="Moneda"><MoneyIcon /></Tool>
                <Tool $w={12} aria-label="Más monedas"><Arrow /></Tool>
                <Tool><Percent>%</Percent></Tool>
                <Tool><Thousands>000</Thousands></Tool>
                <Divider />
                <Tool aria-label="Más decimales"><DecimalIcon more /></Tool>
                <Tool aria-label="Menos decimales"><DecimalIcon /></Tool>
              </ToolRow>
            </Rows>
          </Body>
          <GroupFoot><GroupName>Número</GroupName><PlainButton aria-label="Número"><LaunchIcon /></PlainButton></GroupFoot>
        </Group>

        <Group>
          <Body>
            <BigButton $w={76}><ConditionalIcon /><BigLabel>Formato</BigLabel><BigSecond>condicional <Arrow /></BigSecond></BigButton>
            <BigButton $w={70}><TableFormatIcon /><BigLabel>Dar formato</BigLabel><BigSecond>como tabla <Arrow /></BigSecond></BigButton>
            <Gallery>
              <StyleGrid>
                <StyleCell $fg="#000" $kind="current">Normal</StyleCell>
                <StyleCell $fg="#006100" $bg="#c6efce">Buena</StyleCell>
                <StyleCell $fg="#9c0006" $bg="#ffc7ce">Incorrecto</StyleCell>
                <StyleCell $fg="#9c6500" $bg="#ffeb9c">Neutral</StyleCell>
                <StyleCell $fg="#fa7d00" $bg="#f2f2f2" $line="#7f7f7f" $bold>Cálculo</StyleCell>
                <StyleCell $fg="#fff" $bg="#a5a5a5" $bold $kind="check">Celda de co...</StyleCell>
                <StyleCell $fg="#fa7d00" $kind="linked">Celda vincul...</StyleCell>
                <StyleCell $fg="#3f3f76" $bg="#ffcc99" $line="#7f7f7f">Entrada</StyleCell>
                <StyleCell $fg="#000" $bg="#ffffcc" $line="#b2b2b2">Notas</StyleCell>
                <StyleCell $fg="#3f3f3f" $bg="#f2f2f2" $line="#3f3f3f" $bold>Salida</StyleCell>
              </StyleGrid>
              <GalleryScroll>
                <ScrollStep aria-label="Anterior"><Icon w={5} h={3} crisp><path d="M0 3h5L3 0H2z" fill="#bbb" /></Icon></ScrollStep>
                <ScrollStep aria-label="Siguiente"><Icon w={5} h={3} crisp><path d="M0 0h5L3 3H2z" fill={INK} /></Icon></ScrollStep>
                <ScrollStep aria-label="Más estilos"><CustomizeIcon /></ScrollStep>
              </GalleryScroll>
            </Gallery>
          </Body>
          <GroupFoot><GroupName>Estilos</GroupName></GroupFoot>
        </Group>

        <Group $w={151}>
          <Body $pad={2}>
            <BigButton $w={46}><InsertCellsIcon /><BigLabel>Insertar</BigLabel><BigSecond><Arrow /></BigSecond></BigButton>
            <BigButton $w={46}><DeleteCellsIcon /><BigLabel>Eliminar</BigLabel><BigSecond><Arrow /></BigSecond></BigButton>
            <BigButton $w={52}><FormatCellsIcon /><BigLabel>Formato</BigLabel><BigSecond><Arrow /></BigSecond></BigButton>
          </Body>
          <GroupFoot><GroupName>Celdas</GroupName></GroupFoot>
        </Group>

        <Group $w={235}>
          <Body>
            <Stack $w={95}>
              <TextButton $far><SumIcon /><span>Autosuma</span><Arrow /></TextButton>
              <TextButton><FillDownIcon /><span>Rellenar</span><Arrow /></TextButton>
              <TextButton><EraserIcon /><span>Borrar</span><Arrow /></TextButton>
            </Stack>
            <BigButton $w={60}><SortIcon /><BigLabel>Ordenar y</BigLabel><BigSecond>filtrar <Arrow /></BigSecond></BigButton>
            <BigButton $w={70}><FindIcon /><BigLabel>Buscar y</BigLabel><BigSecond>seleccionar <Arrow /></BigSecond></BigButton>
          </Body>
          <GroupFoot><GroupName>Modificar</GroupName></GroupFoot>
        </Group>
        <Collapse aria-label="Contraer la cinta"><Icon w={9} h={6}><path d="M1 5l3.500-3.500L8 5" stroke={INK} strokeWidth="2" /></Icon></Collapse>
      </Ribbon>

      <FormulaBar>
        <NameBox>
          <input defaultValue="Q108" aria-label="Cuadro de nombres" /><Arrow />
        </NameBox>
        <Grip />
        <FormulaTools>
          <Icon w={18} h={18}><path d="M2 2q6 6 14 14M16 2Q8 8 2 16" stroke="#c3c3c3" strokeWidth="3" /></Icon>
          <Icon w={20} h={18}><path d="M2 10l5 5Q11 7 18 2" stroke="#c3c3c3" strokeWidth="4" /></Icon>
          <Fx>f<FxSmall>x</FxSmall></Fx>
        </FormulaTools>
        <FormulaInput>
          <input aria-label="Barra de fórmulas" />
          <Icon w={13} h={10}><path d="M1.500 2l5 5 5-5" stroke={INK} strokeWidth="3" /></Icon>
        </FormulaInput>
      </FormulaBar>

      <SheetArea>
        <Viewport>
          <Sheet>
            <colgroup>
              <col style={{ width: HEAD_W }} />
              {WIDTHS.map((w, i) => <col key={i} style={{ width: w }} />)}
            </colgroup>
            <thead>
              <tr>
                <Corner />
                {NAMES.map(n => <ColHead key={n} scope="col" $sel={n === 'Q'}>{n}</ColHead>)}
                <ColHead as="td" />
              </tr>
            </thead>
            <tbody>{ROWS.map(r => <SheetRow key={r} r={r} />)}</tbody>
          </Sheet>
        </Viewport>
        <VScroll>
          <ScrollButton aria-label="Subir"><Icon w={7} h={4} crisp><path d="M0 4h7L4 0H3z" fill={INK} /></Icon></ScrollButton>
          <VThumb />
          <Push />
          <ScrollButton aria-label="Bajar"><Arrow /></ScrollButton>
        </VScroll>
      </SheetArea>

      <SheetBar>
        <NavArrows>
          <Icon w={4} h={8} crisp><path d="M4 0v8L0 4z" fill="#c3c3c3" /></Icon>
          <Icon w={4} h={8} crisp><path d="M0 0v8l4-4z" fill="#c3c3c3" /></Icon>
        </NavArrows>
        <SheetTab>Hoja1</SheetTab>
        <SheetTab $active>Hoja2</SheetTab>
        <LastTab>Hoja3</LastTab>
        <AddSheet aria-label="Hoja nueva">
          <Icon w={17} h={17}><circle cx="8.500" cy="8.500" r="7.500" stroke="#777" /><path d="M8.500 4.500v8M4.500 8.500h8" stroke={INK} strokeWidth="2" /></Icon>
        </AddSheet>
        <Push />
        <SheetGrip />
        <HScroll>
          <ScrollButton aria-label="Izquierda"><Icon w={4} h={7} crisp><path d="M4 0v7L0 4V3z" fill={INK} /></Icon></ScrollButton>
          <HThumb />
          <ScrollButton aria-label="Derecha"><Icon w={4} h={7} crisp><path d="M0 0v7l4-3V3z" fill={INK} /></Icon></ScrollButton>
        </HScroll>
      </SheetBar>

      <StatusBar>
        LISTO
        <Push />
        <ViewButton $on aria-label="Normal">
          <Icon w={13} h={13} crisp><path d="M.5.5h12v12H.5zM.5 4.500h12M.5 8.500h12M4.500.5v12M8.500.5v12" stroke={VIEW_STROKE} /></Icon>
        </ViewButton>
        <ViewButton aria-label="Diseño de página">
          <Icon w={14} h={13} crisp><path d="M.5.5h13v12H.5zM3.500 2.500h7v8h-7zM5 4.500h4M5 6.500h4M5 8.500h4" stroke={VIEW_STROKE} /></Icon>
        </ViewButton>
        <ViewButton aria-label="Saltos de página">
          <Icon w={14} h={13} crisp><path d="M.5.5h13v12H.5z" stroke={VIEW_STROKE} /><path d="M0 0h4v8H0zM5 0h4v8H5z" fill={VIEW_STROKE} /></Icon>
        </ViewButton>
        <ZoomButton aria-label="Alejar"><Icon w={6} h={2} crisp><path d="M0 0h6v2H0z" fill="#fff" /></Icon></ZoomButton>
        <Zoom type="range" aria-label="Zoom" defaultValue={50} />
        <ZoomButton aria-label="Acercar"><Icon w={8} h={8} crisp><path d="M3 0h2v8H3zM0 3h8v2H0z" fill="#fff" /></Icon></ZoomButton>
        <ZoomValue>100 %</ZoomValue>
      </StatusBar>
      <TaskEdge />
    </Window>
  );
}
